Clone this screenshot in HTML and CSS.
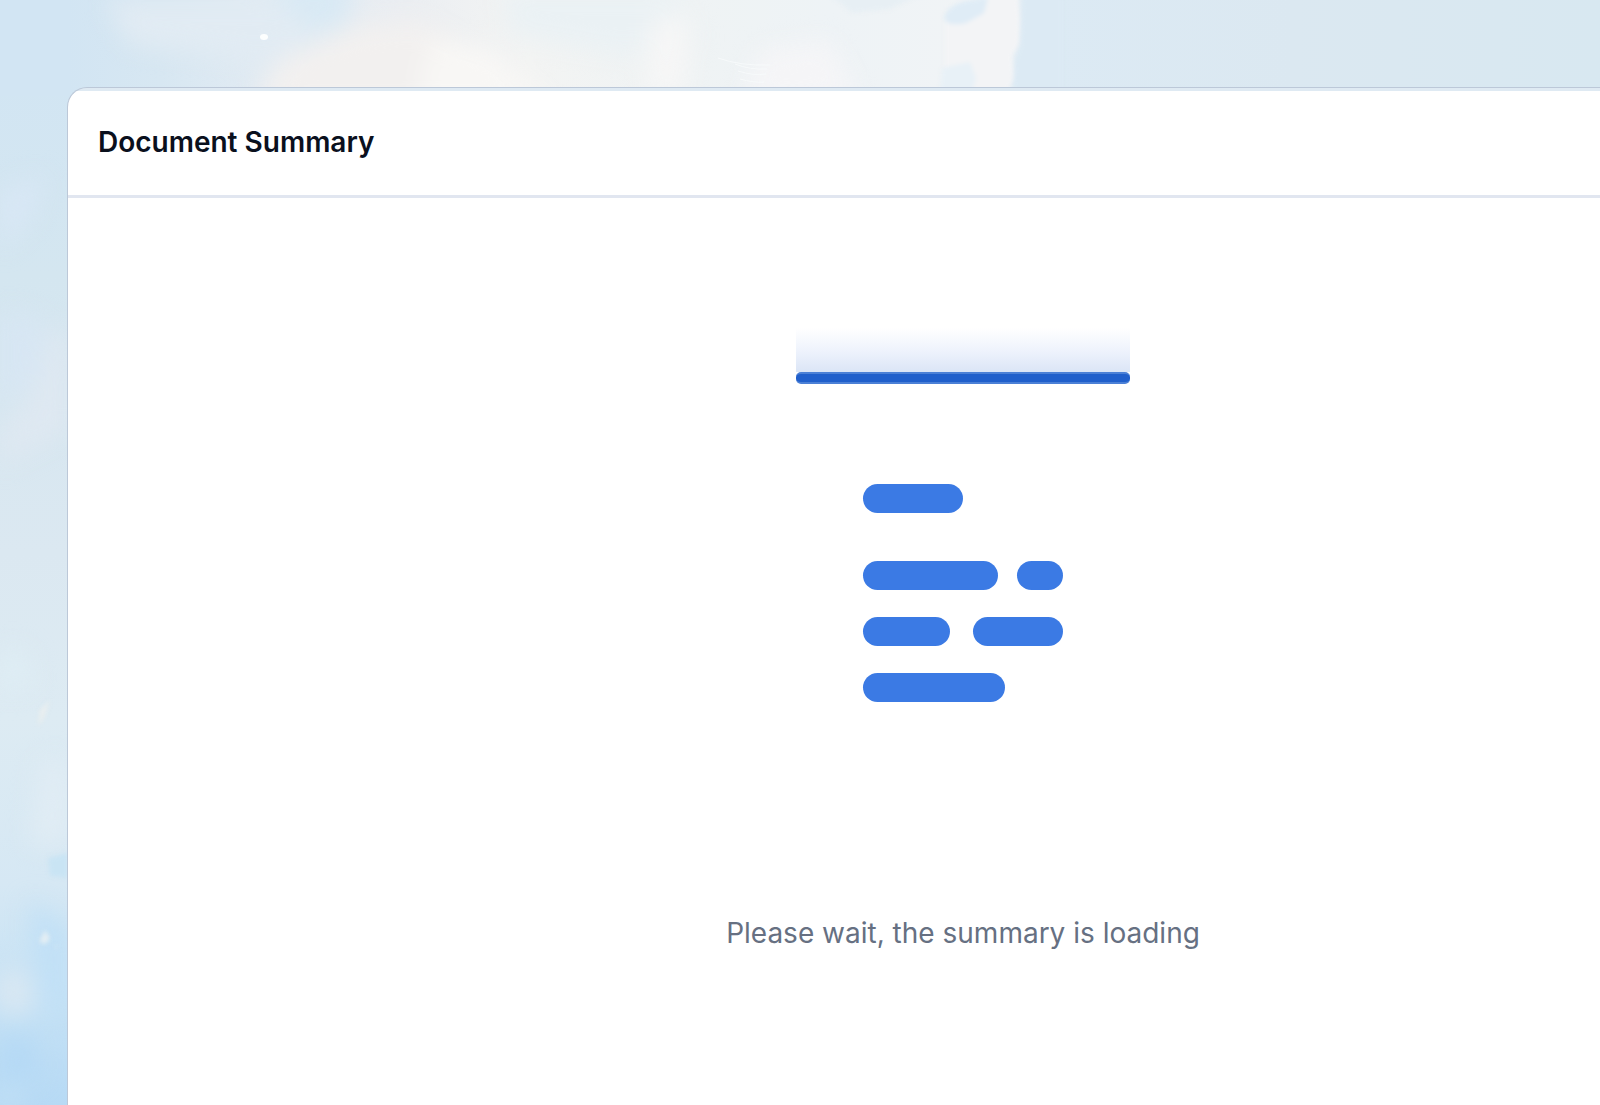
FILE: index.html
```html
<!DOCTYPE html>
<html lang="en">
<head>
  <meta charset="UTF-8">
  <title>Document Summary</title>
  <meta name="viewport" content="width=device-width, initial-scale=1.0">
  <link rel="stylesheet" href="styles.css">
</head>
<body>

<svg class="sky" viewBox="0 0 1600 1105" preserveAspectRatio="none" aria-hidden="true">
  <defs>
    <linearGradient id="side" x1="0" y1="0" x2="0" y2="1">
      <stop offset="0" stop-color="#d1e5f4"/>
      <stop offset="0.25" stop-color="#d4e6f0"/>
      <stop offset="0.5" stop-color="#dbe8f1"/>
      <stop offset="0.65" stop-color="#ddebf3"/>
      <stop offset="0.8" stop-color="#d6e8f4"/>
      <stop offset="0.9" stop-color="#c6e2f5"/>
      <stop offset="1" stop-color="#b7daf5"/>
    </linearGradient>
    <linearGradient id="top" x1="0" y1="0" x2="1" y2="0">
      <stop offset="0" stop-color="#d2e5f3"/>
      <stop offset="0.06" stop-color="#d7e7f2"/>
      <stop offset="0.14" stop-color="#e4ecf3"/>
      <stop offset="0.22" stop-color="#ebeef2"/>
      <stop offset="0.3" stop-color="#f3f4f3"/>
      <stop offset="0.4" stop-color="#eff3f4"/>
      <stop offset="0.5" stop-color="#eef3f6"/>
      <stop offset="0.6" stop-color="#f1f4f6"/>
      <stop offset="0.64" stop-color="#dceaf4"/>
      <stop offset="0.8" stop-color="#dbe8f1"/>
      <stop offset="1" stop-color="#d8e8f1"/>
    </linearGradient>
    <filter id="soft" x="-50%" y="-50%" width="200%" height="200%" color-interpolation-filters="sRGB"><feGaussianBlur stdDeviation="12"/></filter>
    <filter id="edge" x="-50%" y="-50%" width="200%" height="200%" color-interpolation-filters="sRGB"><feGaussianBlur stdDeviation="2"/></filter>
  </defs>
  <rect width="1600" height="1105" fill="url(#side)"/>
  <rect x="68" width="1532" height="96" fill="url(#top)"/>
  <rect width="68" height="96" fill="#d2e5f3"/>

  <!-- clouds along the top -->
  <g filter="url(#soft)">
    <path d="M105 0h170l55 40-70 20-130-15z" fill="#e1ebf3"/>
    <path d="M262-20h95l-12 46-36 4z" fill="#d8e9f4"/>
    <path d="M360 25l60-5 60 30 30 60H250l30-50z" fill="#f2f0ef"/>
    <path d="M430 40l60 8 70 62H415z" fill="#f8f7f5"/>
    <path d="M500-10h170l30 50-80 15-110-20z" fill="#eaf1f4"/>
    <path d="M650 20l40-5-5 80-40 5z" fill="#f6f6f6"/>
    <path d="M760 50l70-10 30 60-120 5z" fill="#f5f5f7"/>
  </g>
  <g filter="url(#edge)">
    <path d="M830-5h90l-30 14-38 4z" fill="#e7eff4"/>
    <path d="M985-4h33l2 24-1 24-7 12 2 22-9 18h-60V20z" fill="#f3f4f6"/>
    <path d="M944 18q2-12 22-17l22-4-4 16-18 10q-20 4-22-5z" fill="#dfecf6"/>
    <path d="M942 68l28-6 6 16-4 14h-32z" fill="#e8f1f7"/>
    <path d="M1022-4h40v98h-50l3-35 5-15z" fill="#dceaf4"/>
  </g>
  <g fill="none" stroke="#f7fafb" stroke-width="1">
    <path d="M718 58q22 8 52 7M735 64q15 6 32 5M738 71q16 5 28 3M740 79q14 4 24 3"/>
  </g>
  <ellipse cx="264" cy="37" rx="4" ry="3" fill="#fcfefe"/>

  <!-- clouds down the left side -->
  <g filter="url(#soft)">
    <path d="M0 190l45-15-15 45-30 30z" fill="#d8e7f5"/>
    <path d="M0 310l45 10-5 60-40 25z" fill="#d7e6f3"/>
    <path d="M50 330h20v100l-70 35v-35q40-30 50-100z" fill="#dee8f1"/>
    <path d="M0 650h25l10 35-35 10z" fill="#deedf4"/>
    <path d="M40 760h30v85H30z" fill="#e0ecf4"/>
    <path d="M30 900l40 30v80H35z" fill="#c1e0f6"/>
    <ellipse cx="14" cy="992" rx="22" ry="24" fill="#d8e7f2"/>
    <path d="M0 1040l30-5 10 40-40 15z" fill="#b5d9f5"/>
    <ellipse cx="8" cy="1098" rx="14" ry="10" fill="#c5e2f5"/>
  </g>
  <g filter="url(#edge)">
    <path d="M48 858l20-5v25l-18-2z" fill="#c9e4f4"/>
    <path d="M50 700l-6 18-6 8 2-16z" fill="#e9eeef"/>
    <path d="M45 930l5 8-4 6-7-2zM54 943l4 6-2-1z" fill="#e4eef3"/>
  </g>
</svg>

<main class="card">
  <header class="card-header">
    <h1>Document Summary</h1>
  </header>
  <section class="card-body" role="status">
    <div class="scanner">
      <div class="scan-glow"></div>
      <div class="scan-line"></div>
    </div>
    <div class="doc">
      <div class="doc-row title-row"><span class="bar title"></span></div>
      <div class="doc-row"><span class="bar long"></span><span class="bar short"></span></div>
      <div class="doc-row"><span class="bar half"></span><span class="bar wide"></span></div>
      <div class="doc-row"><span class="bar last"></span></div>
    </div>
    <p class="message">Please wait, the summary is loading</p>
  </section>
</main>

</body>
</html>
```

FILE: styles.css
```css
* {
  box-sizing: border-box;
}

body {
  margin: 0;
  min-height: 100vh;
  display: flex;
  padding: 87px 0 0 67px;
  background: #dbe8f1;
  font-family: Inter, sans-serif;
  color: #0a101d;
}

.sky {
  position: absolute;
  top: 0;
  left: 0;
  width: 100%;
  height: 100%;
  z-index: -1;
}

.card {
  flex: 1;
  display: flex;
  flex-direction: column;
  border: 1px solid #bcc8d8;
  border-right: none;
  border-bottom: none;
  border-radius: 20px 0 0 0;
  background: linear-gradient(#dfeaf3 3px, #fff 3px);
}

.card-header {
  padding: 36px 30px 35px;
  border-bottom: 3px solid #e1e6f0;
}

h1 {
  margin: 0;
  font-size: 28px;
  line-height: 36px;
  font-weight: 600;
}

.card-body {
  display: flex;
  flex-direction: column;
  align-items: center;
  padding: 130px 0 48px 258px;
}

.scanner {
  width: 334px;
}

.scan-glow {
  height: 44px;
  background: linear-gradient(#fff, #edf2fc 55%, #dbe5f6);
}

.scan-line {
  height: 12px;
  border-radius: 5px;
  background: #205fcb;
  border-top: 2px solid #4b80d6;
  border-bottom: 2px solid #4b80d6;
}

.doc {
  width: 200px;
  margin-top: 100px;
  display: flex;
  flex-direction: column;
  gap: 27px;
}

.doc-row {
  display: flex;
  justify-content: space-between;
}

.title-row {
  margin-bottom: 21px;
}

.bar {
  height: 29px;
  border-radius: 15px;
  background: #3b7ae4;
}

.title {
  width: 100px;
}

.long {
  width: 135px;
}

.short {
  width: 46px;
}

.half {
  width: 87px;
}

.wide {
  width: 90px;
}

.last {
  width: 142px;
}

.message {
  margin: 213px 0 0;
  font-size: 28px;
  line-height: 36px;
  color: #667082;
}
```
